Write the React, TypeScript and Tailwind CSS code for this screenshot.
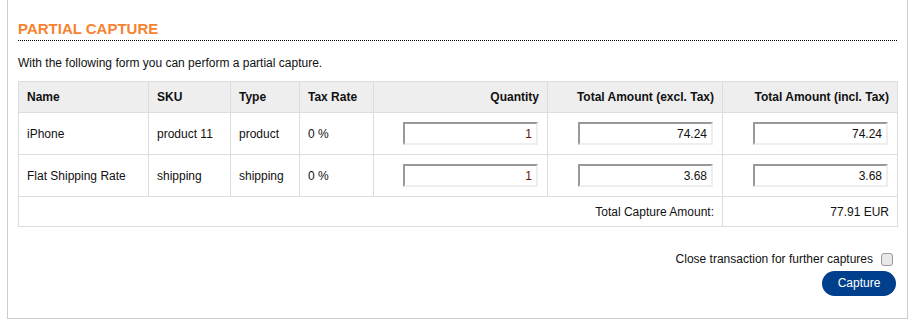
const rows = [
  { name: "iPhone", sku: "product 11", type: "product", tax: "0 %", qty: "1", excl: "74.24", incl: "74.24" },
  { name: "Flat Shipping Rate", sku: "shipping", type: "shipping", tax: "0 %", qty: "1", excl: "3.68", incl: "3.68" },
];

const AmountInput = ({ value, qty }: { value: string; qty?: boolean }) => (
  <input
    type="text"
    defaultValue={value}
    className={`w-[135px] h-[23px] border-2 border-t-[#999] border-l-[#999] border-b-[#eee] border-r-[#eee] bg-white px-[4px] text-right text-[12px] outline-none ${qty ? "text-[#5a1a00]" : "text-[#111]"}`}
  />
);

export default function App() {
  return (
    <div className="min-h-[336px] w-[921px] bg-white text-[12px] text-[#111]" style={{ fontFamily: '"Liberation Sans", Arial, sans-serif' }}>
      <div className="ml-[7px] w-[901px] h-[319px] border-x border-b border-[#ccc] px-[10px] pt-[20px]">
        <h2 className="text-[15px] leading-[18px] font-bold text-[#f7822f] pb-[2px] border-b border-dotted border-black">PARTIAL CAPTURE</h2>
        <p className="mt-[15px] leading-[14px]">With the following form you can perform a partial capture.</p>
        <table className="mt-[11px] w-[879px] border-collapse border border-[#ddd] table-fixed">
          <colgroup>
            <col className="w-[130px]" />
            <col className="w-[82px]" />
            <col className="w-[69px]" />
            <col className="w-[74px]" />
            <col className="w-[174px]" />
            <col className="w-[175px]" />
            <col className="w-[175px]" />
          </colgroup>
          <thead>
            <tr className="h-[31px] bg-[#eee] font-bold">
              <th className="border border-[#ddd] px-[8px] text-left">Name</th>
              <th className="border border-[#ddd] px-[8px] text-left">SKU</th>
              <th className="border border-[#ddd] px-[8px] text-left">Type</th>
              <th className="border border-[#ddd] px-[8px] text-left">Tax Rate</th>
              <th className="border border-[#ddd] px-[8px] text-right">Quantity</th>
              <th className="border border-[#ddd] px-[8px] text-right">Total Amount (excl. Tax)</th>
              <th className="border border-[#ddd] px-[8px] text-right">Total Amount (incl. Tax)</th>
            </tr>
          </thead>
          <tbody>
            {rows.map((r) => (
              <tr key={r.name} className="h-[42px]">
                <td className="border border-[#ddd] px-[8px]">{r.name}</td>
                <td className="border border-[#ddd] px-[8px]">{r.sku}</td>
                <td className="border border-[#ddd] px-[8px]">{r.type}</td>
                <td className="border border-[#ddd] px-[8px]">{r.tax}</td>
                <td className="border border-[#ddd] pr-[9px] text-right"><AmountInput value={r.qty} qty /></td>
                <td className="border border-[#ddd] pr-[9px] text-right"><AmountInput value={r.excl} /></td>
                <td className="border border-[#ddd] pr-[9px] text-right"><AmountInput value={r.incl} /></td>
              </tr>
            ))}
            <tr className="h-[30px]">
              <td colSpan={6} className="border border-[#ddd] px-[8px] text-right">Total Capture Amount:</td>
              <td className="border border-[#ddd] px-[8px] text-right">77.91 EUR</td>
            </tr>
          </tbody>
        </table>
        <div className="mt-[25px] flex flex-col items-end pr-[1px]">
          <label className="flex items-center gap-[8px] pr-[3px] leading-[14px]">
            <span>Close transaction for further captures</span>
            <input type="checkbox" className="appearance-none w-[12px] h-[13px] rounded-[3px] border border-[#999] bg-[#e8e8e8]" />
          </label>
          <button className="mt-[5px] h-[25px] w-[74px] rounded-full bg-[#003f8c] text-white text-[12px] leading-[25px]">Capture</button>
        </div>
      </div>
    </div>
  );
}
